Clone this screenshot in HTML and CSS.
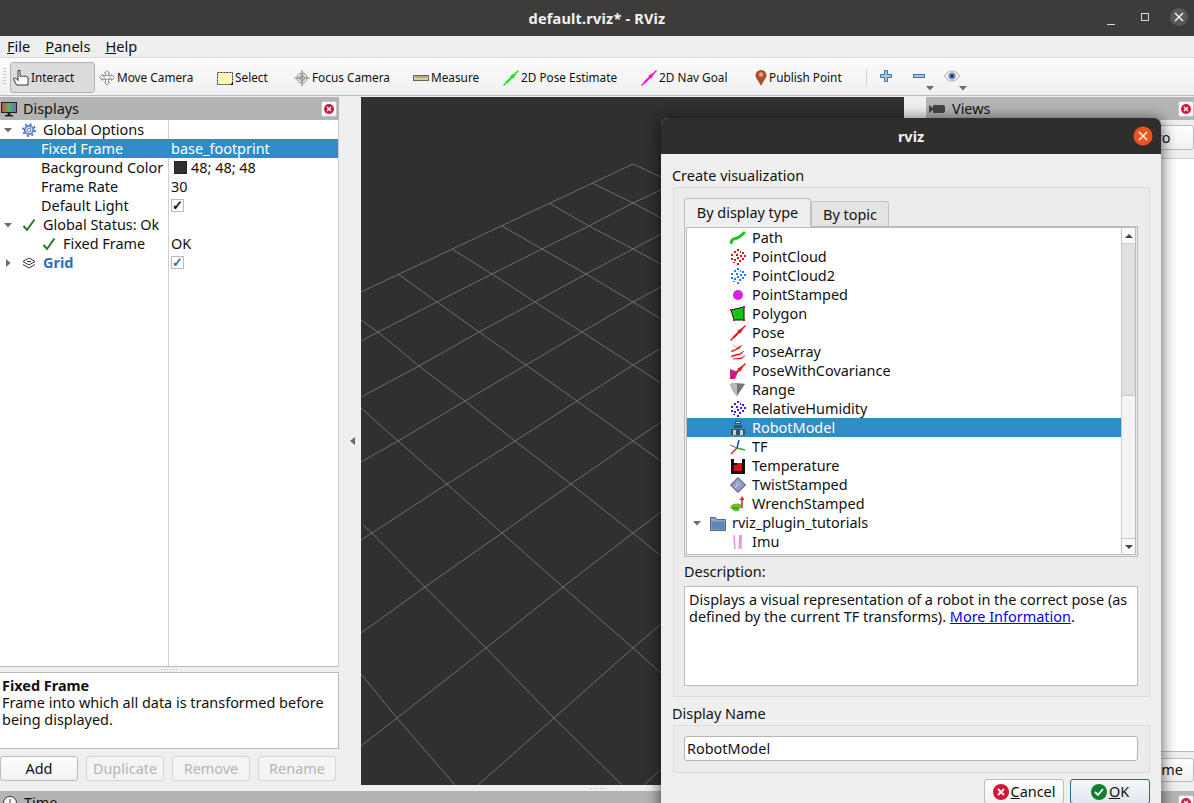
FILE: index.html
```html
<!DOCTYPE html>
<html lang="en">
<head>
<meta charset="utf-8">
<title>default.rviz* - RViz</title>
<link rel="stylesheet" href="styles.css">
</head>
<body>
<svg class="defs" width="0" height="0" aria-hidden="true">
  <symbol id="close" viewBox="0 0 16 16">
    <rect x="0.5" y="0.5" width="15" height="15" rx="2" fill="#fafafa" stroke="#c4c4c4"/>
    <circle cx="8" cy="8" r="5" fill="#d2163c"/>
    <path d="M6 6l4 4M10 6l-4 4" stroke="#fff" stroke-width="1.4"/>
  </symbol>
  <symbol id="check" viewBox="0 0 14 14">
    <path d="M1.5 8l3.5 4L12.5 1.5" fill="none" stroke="#2a7a2a" stroke-width="2"/>
  </symbol>
  <symbol id="down" viewBox="0 0 8 8"><path d="M0 2h8L4 6.500z" fill="#6c6c6c"/></symbol>
  <symbol id="right" viewBox="0 0 8 8"><path d="M2 0v8l4.500-4z" fill="#6c6c6c"/></symbol>
  <symbol id="cloud" viewBox="0 0 16 16">
    <path fill="currentColor" d="M7 0h2v2H7zM4 2h2v2H4zM10 2h1v2h-1zM12 3h2v2h-2zM1 5h2v2H1zM6 5h2v2H6zM10 6h2v2h-2zM14 6h2v2h-2zM1 9h2v2H1zM7 8h2v2H7zM12 9h2v2h-2zM4 10h2v2H4zM9 11h2v2H9zM3 13h2v1H3zM7 14h2v2H7z"/>
  </symbol>
  <symbol id="arrow" viewBox="0 0 16 16">
    <path d="M0.500 15.500L15.500 0.500" fill="none" stroke="currentColor" stroke-width="1.500"/>
    <path d="M2.500 12L8 6.500 7.500 5.500 14 2 10.500 8.500 9.500 8 4 13.500z" fill="currentColor"/>
  </symbol>
</svg>

<header class="titlebar">
  <span class="title-text">default.rviz* - RViz</span>
  <div class="win-controls">
    <svg class="win-icon" viewBox="0 0 24 24"><path d="M8 19.500h8" stroke="#d8d8d6" stroke-width="1"/></svg>
    <svg class="win-icon" viewBox="0 0 24 24"><rect x="8.500" y="8.500" width="7" height="7" fill="none" stroke="#d8d8d6"/></svg>
    <svg class="win-icon win-x" viewBox="0 0 24 24"><circle cx="12" cy="12" r="9" fill="#5b5957"/><path d="M8 8l8 8M16 8l-8 8" stroke="#fff" stroke-width="1.300"/></svg>
  </div>
</header>

<nav class="menubar">
  <span><u>F</u>ile</span><span><u>P</u>anels</span><span><u>H</u>elp</span>
</nav>

<div class="toolbar">
  <div class="grip"></div>
  <div class="tool active">
    <svg class="ticon" viewBox="0 0 16 16"><path d="M5 0.500h2v6l1.500-.5.500.5 1.500-.5.500.5 1.500-.5 2.500 1.500v7.500H3.500L0.500 9 1.500 8l2 0.500 1.500 2z" fill="#fff" stroke="#222" stroke-width="0.900"/></svg>
    <span>Interact</span>
  </div>
  <div class="tool">
    <svg class="ticon" viewBox="0 0 16 16"><path d="M8 0.500l2.500 2.500H9.500v2.500h3V4.500L15.500 7.500l-3 3V9h-3v3.500h1L8 15l-2.500-2.500h1V9h-3v1.500l-3-3 3-3v1h3V3h-1z" fill="#f4f4f4" stroke="#777" stroke-width="0.800"/><path d="M5 5.500h6v4H5z" fill="none" stroke="#999" stroke-width="0.800"/></svg>
    <span>Move Camera</span>
  </div>
  <div class="tool">
    <svg class="ticon" viewBox="0 0 16 16"><rect x="0.500" y="2.500" width="15" height="12" fill="#fbf6b8" stroke="#333" stroke-dasharray="2 1"/><path d="M13 15l3-3v3z" fill="#111"/></svg>
    <span>Select</span>
  </div>
  <div class="tool">
    <svg class="ticon" viewBox="0 0 16 16"><circle cx="8" cy="8" r="5" fill="#eee" stroke="#888"/><path d="M8 0v16M0 8h16" stroke="#888" stroke-width="1.200"/><circle cx="8" cy="8" r="2.500" fill="none" stroke="#888"/></svg>
    <span>Focus Camera</span>
  </div>
  <div class="tool">
    <svg class="ticon" viewBox="0 0 16 16"><rect x="0.500" y="5.500" width="15" height="5" fill="#d8cf9c" stroke="#6a6652"/><path d="M3 6v2M5 6v2M7 6v2M9 6v2M11 6v2M13 6v2" stroke="#6a6652" stroke-width="0.700"/></svg>
    <span>Measure</span>
  </div>
  <div class="tool">
    <svg class="ticon c-lime" viewBox="0 0 16 16"><use href="#arrow"/></svg>
    <span>2D Pose Estimate</span>
  </div>
  <div class="tool">
    <svg class="ticon c-magenta" viewBox="0 0 16 16"><use href="#arrow"/></svg>
    <span>2D Nav Goal</span>
  </div>
  <div class="tool tool-publish">
    <svg class="ticon" viewBox="0 0 16 16"><path d="M8 16C6 11 2.500 8.500 2.500 5.500a5.500 5.500 0 0 1 11 0C13.500 8.500 10 11 8 16z" fill="#a8502a"/><circle cx="8" cy="4.500" r="2.200" fill="#f0a080"/></svg>
    <span>Publish Point</span>
  </div>
  <div class="sep"></div>
  <div class="mini">
    <svg class="micon" viewBox="0 0 12 12"><path d="M4.500 0.500h3v4h4v3h-4v4h-3v-4h-4v-3h4z" fill="#a9c4e6" stroke="#3f72b0"/></svg>
  </div>
  <div class="mini">
    <svg class="micon" viewBox="0 0 12 12"><rect x="0.500" y="4.500" width="11" height="3" fill="#a9c4e6" stroke="#3f72b0"/></svg>
    <svg class="drop" viewBox="0 0 8 8"><use href="#down"/></svg>
  </div>
  <div class="mini mini-eye">
    <svg class="eye" viewBox="0 0 16 12"><path d="M0.500 6C3 2 5.500 1 8 1s5 1 7.500 5C13 10 10.500 11 8 11S3 10 0.500 6z" fill="#eee" stroke="#aaa"/><circle cx="8" cy="6" r="3.500" fill="#6a7fc0"/><circle cx="8" cy="6" r="1.300" fill="#111"/></svg>
    <svg class="drop" viewBox="0 0 8 8"><use href="#down"/></svg>
  </div>
</div>

<main class="main">
  <section class="left-dock">
    <div class="dock-title">
      <svg class="dock-icon" viewBox="0 0 16 16"><defs><linearGradient id="screen" x1="0" x2="1" y1="0" y2="0"><stop offset="0" stop-color="#c05050"/><stop offset=".5" stop-color="#60b060"/><stop offset="1" stop-color="#6070c8"/></linearGradient></defs><rect x="0.500" y="1.500" width="15" height="10" fill="url(#screen)" stroke="#222"/><path d="M6.500 12h3v2h-3zM4 14h8v1.500H4z" fill="#222"/></svg>
      <span class="dock-name">Displays</span>
      <svg class="dock-close" viewBox="0 0 16 16"><use href="#close"/></svg>
    </div>
    <div class="tree">
      <div class="row"><div class="c1">
        <svg class="tw" viewBox="0 0 8 8"><use href="#down"/></svg>
        <svg class="ri" viewBox="0 0 14 14"><circle cx="7" cy="7" r="4.300" fill="#c7d6f0" stroke="#4a74c0" stroke-width="1.500"/><circle cx="7" cy="7" r="6" fill="none" stroke="#4a74c0" stroke-width="1.800" stroke-dasharray="2 2.700"/><circle cx="7" cy="7" r="1.700" fill="#fff" stroke="#4a74c0" stroke-width="0.800"/></svg>
        <span>Global Options</span></div><div class="c2"></div></div>
      <div class="row selected"><div class="c1 lv1"><span>Fixed Frame</span></div><div class="c2">base_footprint</div></div>
      <div class="row"><div class="c1 lv1"><span>Background Color</span></div><div class="c2"><i class="swatch"></i>48; 48; 48</div></div>
      <div class="row"><div class="c1 lv1"><span>Frame Rate</span></div><div class="c2">30</div></div>
      <div class="row"><div class="c1 lv1"><span>Default Light</span></div><div class="c2"><span class="cb">✓</span></div></div>
      <div class="row"><div class="c1">
        <svg class="tw" viewBox="0 0 8 8"><use href="#down"/></svg>
        <svg class="ri" viewBox="0 0 14 14"><use href="#check"/></svg>
        <span>Global Status: Ok</span></div><div class="c2"></div></div>
      <div class="row"><div class="c1 lv2">
        <svg class="ri" viewBox="0 0 14 14"><use href="#check"/></svg>
        <span>Fixed Frame</span></div><div class="c2">OK</div></div>
      <div class="row"><div class="c1">
        <svg class="tw" viewBox="0 0 8 8"><use href="#right"/></svg>
        <svg class="ri" viewBox="0 0 14 14"><path d="M7 2l6 3.500-6 3.500-6-3.500zM1 8.500l6 3.500 6-3.500M5 5.500h4" fill="none" stroke="#333" stroke-width="1"/></svg>
        <strong class="grid-name">Grid</strong></div><div class="c2"><span class="cb cb-blue">✓</span></div></div>
    </div>
    <div class="split-h"><i></i></div>
    <div class="help">
      <b>Fixed Frame</b><br>Frame into which all data is transformed before being displayed.
    </div>
    <div class="dock-buttons">
      <button class="btn">Add</button>
      <button class="btn" disabled>Duplicate</button>
      <button class="btn" disabled>Remove</button>
      <button class="btn" disabled>Rename</button>
    </div>
  </section>

  <div class="gutter"><svg class="gutter-arrow" viewBox="0 0 5 8"><path d="M5 0v8L0 4z" fill="#666"/></svg></div>

  <div class="canvas">
    <svg class="grid3d" viewBox="361 97 543 688" width="543" height="688">
      <g fill="none" stroke="#6e6e6e" stroke-width="1">
        <path d="M633 164L361 292"/>
        <path d="M661 190L633 203 589 226 542 249 492 274 437 302 378 332 361 341"/>
        <path d="M661 234L633 249 586 274 535 302 479 332 419 366 361 397"/>
        <path d="M661 287L633 302 582 332 526 365 465 401 398 441 361 462"/>
        <path d="M661 348L633 365 577 401 515 441 447 484 372 533 361 540"/>
        <path d="M661 422L633 441 571 484 502 533 425 587 361 633"/>
        <path d="M661 512L633 533 563 587 486 648 397 718 361 746"/>
        <path d="M661 624L633 648 554 718 478 785"/>
        <path d="M661 769L644 785"/>
        <path d="M633 164L661 177"/>
        <path d="M592 183L633 203 661 218"/>
        <path d="M549 203L589 226 633 249 661 264"/>
        <path d="M502 226L542 249 586 274 633 302 661 319"/>
        <path d="M452 249L492 274 535 302 582 332 633 365 661 383"/>
        <path d="M398 274L437 302 479 332 526 365 577 401 633 441 661 461"/>
        <path d="M361 320L378 332 419 366 465 401 515 441 571 484 633 533 661 556"/>
        <path d="M361 408L398 441 447 484 502 533 563 587 633 648 661 673"/>
        <path d="M363 525L372 533 425 587 486 648 554 718 622 785"/>
        <path d="M361 674L397 718 455 785"/>
      </g>
    </svg>
  </div>

  <div class="gutter2"></div>

  <section class="right-dock">
    <div class="dock-title">
      <svg class="dock-icon cam" viewBox="0 0 16 16"><path d="M0 4l4 3V5a1 1 0 0 1 1-1h9a2 2 0 0 1 2 2v4a2 2 0 0 1-2 2H5a1 1 0 0 1-1-1V9l-4 3z" fill="#444"/></svg>
      <span class="dock-name">Views</span>
      <svg class="dock-close" viewBox="0 0 16 16"><use href="#close"/></svg>
    </div>
    <div class="views-top"><button class="btn">Zero</button></div>
    <div class="views-list"></div>
    <div class="views-bottom"><button class="btn">Rename</button></div>
  </section>
</main>

<div class="split-v"><i></i></div>

<div class="time-bar">
  <svg class="dock-icon" viewBox="0 0 16 16"><circle cx="8" cy="8" r="6.500" fill="#fff" stroke="#333"/><path d="M8 4v4" stroke="#333"/></svg>
  <span class="dock-name">Time</span>
  <svg class="dock-close" viewBox="0 0 16 16"><use href="#close"/></svg>
</div>

<div class="dialog" role="dialog">
  <div class="dlg-title">
    <span>rviz</span>
    <svg class="dlg-x" viewBox="0 0 20 20"><circle cx="10" cy="10" r="9.500" fill="#e95420"/><path d="M6 6l8 8M14 6l-8 8" stroke="#fff" stroke-width="1.300"/></svg>
  </div>
  <div class="dlg-body">
    <div class="dlg-label">Create visualization</div>
    <div class="group group-main">
      <div class="tabs">
        <div class="tab tab-on">By display type</div>
        <div class="tab tab-off">By topic</div>
      </div>
      <div class="pane">
        <div class="list">
          <div class="items">
            <div class="it"><svg class="ii" viewBox="0 0 16 16"><path d="M1 14c0-5 3-5 6-6s4-2 8-6" fill="none" stroke="#18c818" stroke-width="3"/></svg>Path</div>
            <div class="it"><svg class="ii c-red" viewBox="0 0 16 16"><use href="#cloud"/></svg>PointCloud</div>
            <div class="it"><svg class="ii c-blue" viewBox="0 0 16 16"><use href="#cloud"/></svg>PointCloud2</div>
            <div class="it"><svg class="ii" viewBox="0 0 16 16"><circle cx="8" cy="8" r="5" fill="#e020e0"/></svg>PointStamped</div>
            <div class="it"><svg class="ii" viewBox="0 0 16 16"><path d="M1 4l13-3v13H4z" fill="#10c810" stroke="#111"/><path d="M0 3h2v2H0zM13 0h2v2h-2zM13 13h2v2h-2zM3 13h2v2H3z" fill="#d01818"/></svg>Polygon</div>
            <div class="it"><svg class="ii c-posered" viewBox="0 0 16 16"><use href="#arrow"/></svg>Pose</div>
            <div class="it"><svg class="ii c-posered" viewBox="0 0 16 16"><path d="M1 7l5-2 1-1 5-3-3 4-1 0-6 3zM3 1l4 3M1 12l6-2 2 0 5-3-4 4-2 0-6 2zM3 15l5-1 2 0 5-2-4 3-3 0z" fill="currentColor" stroke="currentColor" stroke-width="0.500"/></svg>PoseArray</div>
            <div class="it"><svg class="ii c-posered" viewBox="0 0 16 16"><path d="M0 6l8 3-3 7H0z" fill="#c020a0"/><use href="#arrow"/></svg>PoseWithCovariance</div>
            <div class="it"><svg class="ii" viewBox="0 0 16 16"><path d="M0 2c2-1 12-1 15 0L7 14C4 11 1 6 0 2z" fill="#777"/><path d="M0 2c2-1 5-1 7 0l0 12C4 11 1 6 0 2z" fill="#bbb"/></svg>Range</div>
            <div class="it"><svg class="ii c-violet" viewBox="0 0 16 16"><use href="#cloud"/></svg>RelativeHumidity</div>
            <div class="it it-sel"><svg class="ii" viewBox="0 0 16 16"><path d="M5 1h6v3H5zM4 5h8v3H4zM1 9h14v6H1z" fill="#39505e"/><path d="M6 2h4v1H6zM3 10h3v5H3zM10 10h3v5h-3z" fill="#c4d2da"/></svg><span class="sel-text">RobotModel</span></div>
            <div class="it"><svg class="ii" viewBox="0 0 16 16"><path d="M7 9L15 11" stroke="#20b020" stroke-width="1.500"/><path d="M7 9L9 1" stroke="#2040e0" stroke-width="1.500"/><path d="M7 9L1 15" stroke="#e02020" stroke-width="1.500"/><path d="M0 6l7 3" stroke="#666"/></svg>TF</div>
            <div class="it"><svg class="ii" viewBox="0 0 16 16"><path d="M1 1h14v15H1z" fill="#111"/><path d="M4 1h8v4H4z" fill="#fff"/><path d="M4 7h3V5h5v8H4z" fill="#e01010"/></svg>Temperature</div>
            <div class="it"><svg class="ii" viewBox="0 0 16 16"><path d="M8 0.500L15.500 8 8 15.500 0.500 8z" fill="#8c9cc4" stroke="#445"/><path d="M8 4L5 11M11 6L6 10" stroke="#c8d0e4"/></svg>TwistStamped</div>
            <div class="it"><svg class="ii" viewBox="0 0 16 16"><path d="M12 0l2.500 4h-1.700v8h-1.600V4H9.500z" fill="#d03030"/><path d="M0 11c2-4 7-4 11-3v4h-1l-1 3c-3 1-7 0-9-4z" fill="#6cc030"/><path d="M3 12h5" stroke="#2a6a10"/></svg>WrenchStamped</div>
            <div class="it it-folder"><svg class="tw2" viewBox="0 0 8 8"><use href="#down"/></svg><svg class="ii" viewBox="0 0 16 16"><path d="M0.500 2.500h5l1 2h9v11h-15z" fill="#8aa8c8" stroke="#5a6878"/><path d="M1.500 6.500h13v8h-13z" fill="#5f88b8"/></svg>rviz_plugin_tutorials</div>
            <div class="it"><svg class="ii" viewBox="0 0 16 16"><path d="M4 1l1 14M9 15l1-14M11 1l0 14" fill="none" stroke="#e090d8" stroke-width="1.400"/></svg>Imu</div>
          </div>
          <div class="sbar">
            <div class="sb-btn"><svg class="sb-arrow" viewBox="0 0 8 8"><path d="M0 6L4 2l4 4z" fill="#444"/></svg></div>
            <div class="sb-groove"></div>
            <div class="sb-thumb"></div>
            <div class="sb-btn"><svg class="sb-arrow" viewBox="0 0 8 8"><path d="M0 2l4 4 4-4z" fill="#444"/></svg></div>
          </div>
        </div>
      </div>
      <div class="desc-label">Description:</div>
      <div class="desc">Displays a visual representation of a robot in the correct pose (as defined by the current TF transforms). <a href="#info">More Information</a>.</div>
    </div>
    <div class="dlg-label name-label">Display Name</div>
    <div class="group group-name">
      <div class="input">RobotModel</div>
    </div>
    <div class="dlg-buttons">
      <button class="btn dbtn"><svg class="bi" viewBox="0 0 16 16"><circle cx="8" cy="8" r="8" fill="#d2163c"/><path d="M5 5l6 6M11 5l-6 6" stroke="#fff" stroke-width="1.800"/></svg><span><u>C</u>ancel</span></button>
      <button class="btn dbtn ok"><svg class="bi" viewBox="0 0 16 16"><circle cx="8" cy="8" r="8" fill="#108030"/><path d="M4 8l3 3 5-6" fill="none" stroke="#fff" stroke-width="1.800"/></svg><span><u>O</u>K</span></button>
    </div>
  </div>
</div>
</body>
</html>
```
FILE: styles.css
```css
* { box-sizing: border-box; }
html, body { margin: 0; padding: 0; }
body {
  width: 1194px;
  height: 803px;
  overflow: hidden;
  position: relative;
  background: #efefef;
  color: #111;
  font: 14.45px/19px "Noto Sans", "Open Sans", sans-serif;
}
.defs { position: absolute; }
.titlebar {
  height: 36px;
  background: #3d3c3a;
  display: flex;
  align-items: center;
  justify-content: center;
  position: relative;
}
.title-text { color: #f2f2f2; font-weight: 700; font-size: 14.5px; letter-spacing: .2px; }
.win-controls {
  position: absolute;
  right: 3px;
  top: 5px;
  display: flex;
  gap: 10px;
}
.win-icon { width: 24px; height: 24px; display: block; }
.menubar {
  height: 22px;
  border-bottom: 1px solid #d8d8d8;
  display: flex;
  gap: 15px;
  padding: 0 0 0 7px;
  font-size: 14.6px;
  line-height: 20px;
}
.toolbar {
  height: 38px;
  margin-bottom: 1px;
  background: linear-gradient(#fbfbfb, #f0f0f0);
  border-bottom: 1px solid #bdbdbd;
  display: grid;
  grid-template-columns: 10px 85px 118px 77px 119px 90px 138px 112px 117px 14px 33px 31px 40px;
  align-items: center;
  font-size: 11.8px;
}
.grip {
  width: 3px;
  height: 17px;
  margin-left: 3px;
  background: repeating-linear-gradient(#c8c8c8 0 1px, transparent 1px 3px);
}
.tool {
  height: 31px;
  margin-top: 2px;
  display: flex;
  align-items: center;
  gap: 2px;
  padding-left: 4px;
  white-space: nowrap;
}
.tool.active {
  background: #dcdcdc;
  border: 1px solid #b2b2b2;
  border-radius: 3px;
  padding-left: 2px;
}
.ticon { width: 16px; height: 16px; flex: none; }
.tool-publish { gap: 0; }
.c-lime { color: #18e818; }
.c-magenta { color: #ee18d8; }
.c-red { color: #e01010; }
.c-blue { color: #2080f0; }
.c-violet { color: #5010e0; }
.c-posered { color: #e02020; }
.sep { width: 1px; height: 19px; background: #d4d4d4; margin-top: 2px; }
.mini { height: 31px; display: flex; align-items: center; position: relative; }
.micon { width: 12px; height: 12px; margin-top: -1px; }
.eye { width: 16px; height: 12px; margin-top: -1px; }
.drop { width: 8px; height: 8px; position: absolute; right: 10px; bottom: 0; }
.mini-eye .drop { right: 17px; }

.main { height: 688px; display: flex; }
.left-dock { width: 339px; flex: none; display: flex; flex-direction: column; }
.dock-title {
  height: 23px;
  flex: none;
  background: #b4b4b4;
  display: flex;
  align-items: center;
  padding: 0 2px 0 1px;
}
.dock-icon { width: 16px; height: 16px; flex: none; }
.dock-name { margin-left: 6px; font-size: 14.4px; }
.dock-close { width: 16px; height: 16px; margin-left: auto; flex: none; }
.tree {
  height: 547px;
  flex: none;
  background: #fff linear-gradient(#d0d0d0, #d0d0d0) 168px 0 / 1px 100% no-repeat;
  border-bottom: 1px solid #bbb;
  border-right: 1px solid #ccc;
}
.row { height: 19px; display: grid; grid-template-columns: 168px 1fr; white-space: nowrap; }
.row.selected { background: #308cc6; color: #fff; }
.c1 { display: flex; align-items: center; padding-left: 4px; }
.c1 .tw { width: 8px; height: 8px; flex: none; }
.c1 .ri { width: 14px; height: 14px; margin: 0 7px 0 10px; flex: none; }
.lv1 { padding-left: 41px; }
.lv2 { padding-left: 32px; }
.c2 { padding-left: 3px; display: flex; align-items: center; }
.swatch { width: 13px; height: 13px; margin: 0 4px 0 3px; background: #303030; border: 1px solid #222; }
.cb {
  width: 13px;
  height: 13px;
  border: 1px solid #bbb;
  background: #fff;
  font-size: 13px;
  line-height: 11px;
  text-align: center;
  font-weight: 700;
  color: #111;
}
.cb-blue { color: #2b6fc0; }
.grid-name { color: #2b6fc0; }
.split-h { height: 5px; flex: none; display: flex; justify-content: center; align-items: center; }
.split-h i, .split-v i {
  width: 17px;
  height: 1px;
  background: repeating-linear-gradient(90deg, #bbb 0 1px, transparent 1px 3px);
}
.help {
  height: 77px;
  flex: none;
  background: #fff;
  border: 1px solid #bbb;
  border-left: 0;
  padding: 4px 2px 0 2px;
  line-height: 17px;
}
.dock-buttons { display: flex; gap: 8px; padding-top: 7px; }
.btn {
  height: 25px;
  width: 78px;
  font: inherit;
  line-height: 19px;
  color: #111;
  padding: 0;
  background: linear-gradient(#fefefe, #f1f1f1);
  border: 1px solid #bcbcbc;
  border-radius: 3px;
}
.btn:disabled { color: #b4b4b4; background: #f4f4f4; border-color: #d4d4d4; }
.gutter { width: 22px; flex: none; display: flex; align-items: center; justify-content: flex-end; padding-right: 6px; }
.gutter-arrow { width: 5px; height: 8px; }
.canvas { width: 543px; height: 688px; flex: none; background: #303030; }
.grid3d { display: block; }
.gutter2 { width: 22px; flex: none; }
.right-dock { flex: 1; display: flex; flex-direction: column; }
.right-dock .dock-title { padding-left: 3px; padding-right: 0; }
.right-dock .dock-name { margin-left: 7px; }
.views-top { height: 39px; padding-top: 5px; display: flex; justify-content: flex-end; border-bottom: 1px solid #d0d0d0; }
.views-list { height: 593px; flex: none; background: #fff; border-bottom: 1px solid #bbb; }
.views-bottom { padding-top: 6px; display: flex; justify-content: flex-end; }
.views-bottom .btn { height: 24px; padding-bottom: 2px; }
.split-v { height: 6px; display: flex; justify-content: center; align-items: center; padding-left: 4px; }
.time-bar {
  height: 23px;
  background: #b4b4b4;
  display: flex;
  align-items: center;
  padding: 0 0 0 2px;
}

.dialog {
  position: absolute;
  left: 661px;
  top: 118px;
  width: 500px;
  height: 700px;
  background: #efefef;
  border-radius: 7px 7px 0 0;
  box-shadow: 0 2px 14px 2px rgba(0, 0, 0, .55);
}
.dlg-title {
  height: 36px;
  background: #302d2d;
  border-radius: 7px 7px 0 0;
  display: flex;
  align-items: center;
  justify-content: center;
  color: #f2f2f2;
  font-weight: 700;
  font-size: 14.5px;
  position: relative;
}
.dlg-x { position: absolute; right: 8px; top: 8px; width: 20px; height: 20px; }
.dlg-body { padding: 13px 0 0 11px; }
.dlg-label { height: 20px; line-height: 17px; }
.group { width: 477px; background: #ececec; border: 1px solid #dcdcdc; margin-left: 1px; padding-left: 10px; }
.group-main { height: 510px; padding-top: 10px; }
.tabs { display: flex; height: 28px; align-items: flex-end; }
.tab {
  height: 25px;
  background: #e4e4e4;
  border: 1px solid #c0c0c0;
  border-bottom: 0;
  border-radius: 3px 3px 0 0;
  line-height: 25px;
  text-align: center;
  white-space: nowrap;
}
.tab-off { width: 78px; }
.tab-on {
  width: 127px;
  height: 29px;
  line-height: 28px;
  background: #efefef;
  margin-bottom: -1px;
  position: relative;
  z-index: 1;
}
.pane { width: 454px; height: 331px; border: 1px solid #bbb; padding: 0 1px 1px 1px; }
.list { height: 328px; border: 1px solid #bbb; border-top-width: 1px; background: #fff; display: flex; }
.items { flex: 1; min-width: 0; }
.it { height: 19px; display: flex; align-items: center; padding-left: 43px; white-space: nowrap; }
.ii { width: 16px; height: 16px; margin-right: 6px; flex: none; }
.it-sel { background: #308cc6; color: #fff; }
.sel-text { color: #fff; }
.it-folder { padding-left: 6px; }
.tw2 { width: 8px; height: 8px; margin-right: 9px; flex: none; }
.sbar { width: 14px; flex: none; display: flex; flex-direction: column; border-left: 1px solid #c8c8c8; }
.sb-btn { height: 15px; flex: none; background: #fafafa; display: flex; align-items: center; justify-content: center; }
.sb-arrow { width: 8px; height: 8px; }
.sb-groove { height: 152px; background: #e0e0e0; border-top: 1px solid #d0d0d0; }
.sb-thumb { flex: 1; background: #f4f4f4; border-top: 1px solid #c8c8c8; border-bottom: 1px solid #c8c8c8; }
.desc-label { height: 29px; padding-top: 6px; line-height: 17px; }
.desc {
  width: 454px;
  height: 100px;
  background: #fff;
  border: 1px solid #bbb;
  padding: 4px 4px;
  line-height: 17px;
}
.desc a { color: #0000ee; }
.name-label { margin-top: 7px; height: 21px; padding-top: 1px; }
.group-name { height: 48px; padding-top: 10px; }
.input {
  width: 454px;
  height: 25px;
  background: #fff;
  border: 1px solid #b4b4b4;
  border-radius: 3px;
  padding-left: 2px;
  line-height: 24px;
}
.dlg-buttons { display: flex; justify-content: flex-end; gap: 6px; padding: 6px 11px 0 0; }
.dbtn { width: 80px; height: 25px; display: flex; align-items: center; justify-content: center; gap: 2px; }
.bi { width: 16px; height: 16px; flex: none; }
.ok { border-color: #2c6a94; background: linear-gradient(#f6f8fa, #dfe8ef); }
```
